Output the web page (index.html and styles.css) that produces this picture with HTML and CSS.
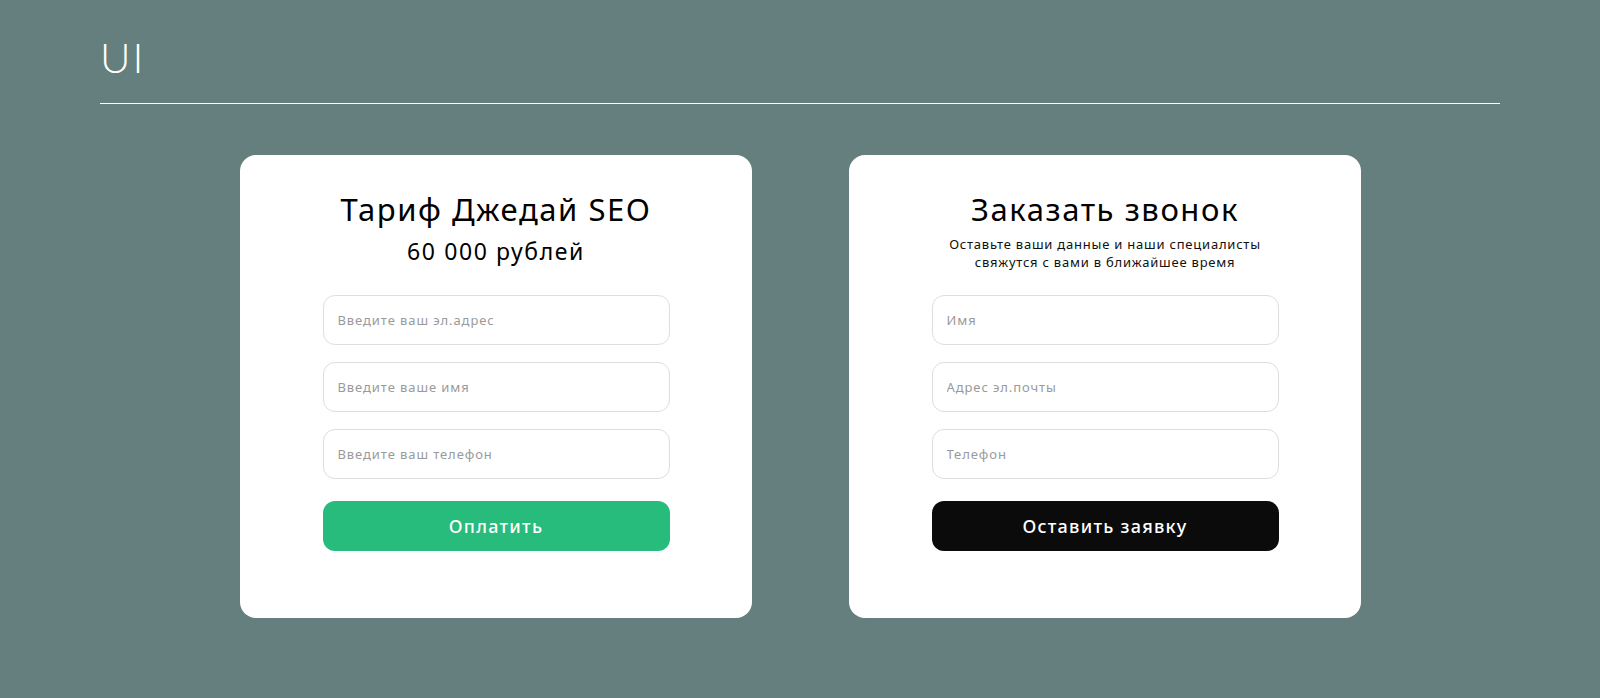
FILE: index.html
```html
<!DOCTYPE html>
<html lang="ru">
<head>
<meta charset="utf-8">
<title>UI</title>
<link rel="stylesheet" href="styles.css">
</head>
<body>
<div class="page">
  <header class="top">
    <h1 class="brand">UI</h1>
  </header>
  <main class="cards">
    <section class="card">
      <div class="card-head">
        <h2 class="card-title">Тариф Джедай SEO</h2>
        <p class="card-price">60 000 рублей</p>
      </div>
      <form class="form">
        <input class="field" type="text" placeholder="Введите ваш эл.адрес">
        <input class="field" type="text" placeholder="Введите ваше имя">
        <input class="field" type="text" placeholder="Введите ваш телефон">
        <button class="btn btn-green" type="button">Оплатить</button>
      </form>
    </section>
    <section class="card">
      <div class="card-head">
        <h2 class="card-title">Заказать звонок</h2>
        <p class="card-sub">Оставьте ваши данные и наши специалисты<br>свяжутся с вами в ближайшее время</p>
      </div>
      <form class="form">
        <input class="field" type="text" placeholder="Имя">
        <input class="field" type="text" placeholder="Адрес эл.почты">
        <input class="field" type="text" placeholder="Телефон">
        <button class="btn btn-black" type="button">Оставить заявку</button>
      </form>
    </section>
  </main>
</div>
</body>
</html>
```
FILE: styles.css
```css
* { box-sizing: border-box; }
html, body { margin: 0; padding: 0; }
body {
  background: #647f7d;
  font-family: "Noto Sans", "DejaVu Sans", sans-serif;
  width: 1600px;
  height: 698px;
  overflow: hidden;
}
.page { padding: 0 100px; }
.top {
  height: 104px;
  border-bottom: 1px solid #ffffff;
  padding-top: 30px;
}
.brand {
  margin: 0;
  font-family: "Lato", "Open Sans", sans-serif;
  font-weight: 300;
  font-size: 42px;
  line-height: 54px;
  color: #ffffff;
  letter-spacing: 2px;
}
.cards {
  display: flex;
  justify-content: center;
  gap: 97px;
  padding-top: 51px;
}
.card {
  width: 512px;
  height: 463px;
  background: #ffffff;
  border-radius: 16px;
  padding: 36px 82px 0 83px;
}
.card-head {
  height: 104px;
  text-align: center;
}
.card-title {
  margin: 0;
  font-weight: 400;
  font-size: 31px;
  line-height: 36px;
  letter-spacing: 0.05em;
  color: #000000;
}
.card-price {
  margin: 9px 0 0;
  font-size: 23px;
  line-height: 30px;
  font-weight: 400;
  letter-spacing: 0.07em;
  color: #000000;
}
.card-sub {
  margin: 8px 0 0;
  font-size: 13px;
  line-height: 18px;
  letter-spacing: 0.06em;
  color: #111111;
}
.form {
  display: flex;
  flex-direction: column;
  gap: 17px;
}
.field {
  width: 347px;
  height: 50px;
  border: 1px solid #dedede;
  border-radius: 12px;
  padding: 0 14px;
  font-family: inherit;
  font-size: 13px;
  letter-spacing: 0.07em;
  color: #333;
  background: #fff;
  outline: none;
}
.field::placeholder { color: #9a9a9a; }
.btn {
  margin-top: 5px;
  width: 347px;
  height: 50px;
  border: none;
  border-radius: 12px;
  font-family: inherit;
  font-size: 18px;
  font-weight: 500;
  letter-spacing: 0.07em;
  color: #ffffff;
  cursor: pointer;
}
.btn-green { background: #27bb7c; }
.btn-black { background: #0b0b0b; }
```
